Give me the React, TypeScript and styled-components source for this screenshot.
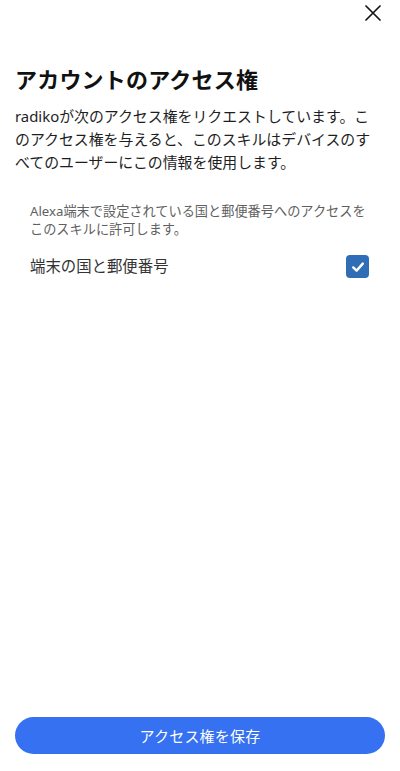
import React, { useState } from "react";
import styled, { createGlobalStyle } from "styled-components";

const GlobalStyle = createGlobalStyle`
  html, body {
    margin: 0;
    padding: 0;
    background: #ffffff;
  }
  body {
    font-family: "Noto Sans", "Noto Sans CJK JP", sans-serif;
    -webkit-font-smoothing: antialiased;
  }
  #root {
    height: 100vh;
  }
`;

const Screen = styled.div`
  height: 100vh;
  box-sizing: border-box;
  display: flex;
  flex-direction: column;
  padding: 0 15px 17px;
`;

const TopBar = styled.header`
  height: 25px;
  display: flex;
  justify-content: flex-end;
  align-items: center;
`;

const CloseButton = styled.button`
  width: 24px;
  height: 24px;
  padding: 0;
  border: none;
  background: none;
  display: flex;
  align-items: center;
  justify-content: center;
  cursor: pointer;
  svg {
    width: 16px;
    height: 16px;
  }
`;

const Title = styled.h1`
  margin: 39px 0 0;
  font-size: 22px;
  line-height: 30px;
  font-weight: 700;
  color: #111111;
  letter-spacing: 0.2px;
`;

const Lead = styled.p`
  margin: 11px 0 0;
  font-size: 14.9px;
  line-height: 23px;
  color: #1e1e1e;
`;

const Permission = styled.section`
  margin-top: 28px;
  padding: 0 16px 0 15px;
`;

const Note = styled.p`
  margin: 0;
  font-size: 13.2px;
  line-height: 18px;
  color: #5f5f5f;
`;

const Row = styled.label`
  margin-top: 16px;
  display: flex;
  align-items: center;
  justify-content: space-between;
  cursor: pointer;
`;

const RowLabel = styled.span`
  font-size: 15.4px;
  line-height: 24px;
  color: #333333;
  margin-top: 1px;
`;

const Box = styled.span<{ $checked: boolean }>`
  width: 23px;
  height: 23px;
  box-sizing: border-box;
  border-radius: 4px;
  display: flex;
  align-items: center;
  justify-content: center;
  background: ${(p) => (p.$checked ? "#2f6db6" : "#ffffff")};
  border: ${(p) => (p.$checked ? "none" : "1.5px solid #8a8a8a")};
  svg {
    width: 14px;
    height: 14px;
  }
`;

const Spacer = styled.div`
  flex: 1;
`;

const SaveButton = styled.button`
  height: 37px;
  width: 100%;
  border: none;
  border-radius: 19px;
  background: #3571f1;
  color: #ffffff;
  font-family: inherit;
  font-size: 15px;
  letter-spacing: 0.2px;
  cursor: pointer;
`;

export default function App() {
  const [checked, setChecked] = useState(true);

  return (
    <>
      <GlobalStyle />
      <Screen>
        <TopBar>
          <CloseButton aria-label="閉じる">
            <svg viewBox="0 0 16 16" fill="none">
              <path
                d="M1 1 L15 15 M15 1 L1 15"
                stroke="#151515"
                strokeWidth="1.7"
                strokeLinecap="round"
              />
            </svg>
          </CloseButton>
        </TopBar>

        <Title>アカウントのアクセス権</Title>
        <Lead>
          radikoが次のアクセス権をリクエストしています。こ
          <br />
          のアクセス権を与えると、このスキルはデバイスのす
          <br />
          べてのユーザーにこの情報を使用します。
        </Lead>

        <Permission>
          <Note>
            Alexa端末で設定されている国と郵便番号へのアクセスを
            <br />
            このスキルに許可します。
          </Note>
          <Row onClick={() => setChecked(!checked)}>
            <RowLabel>端末の国と郵便番号</RowLabel>
            <Box $checked={checked}>
              {checked && (
                <svg viewBox="0 0 14 14" fill="none">
                  <path
                    d="M2.2 7.4 L5.6 10.6 L11.8 3.6"
                    stroke="#ffffff"
                    strokeWidth="2.4"
                    strokeLinecap="round"
                    strokeLinejoin="round"
                  />
                </svg>
              )}
            </Box>
          </Row>
        </Permission>

        <Spacer />
        <SaveButton>アクセス権を保存</SaveButton>
      </Screen>
    </>
  );
}
